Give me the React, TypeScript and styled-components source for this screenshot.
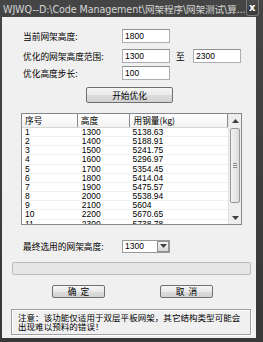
import React from "react";
import styled, { createGlobalStyle } from "styled-components";

const GlobalStyle = createGlobalStyle`
  html, body {
    margin: 0;
    padding: 0;
    background: #2e2e2e;
  }
  body {
    font-family: "Noto Sans CJK SC", "Liberation Sans", sans-serif;
  }
`;

interface ResultRow {
  no: number;
  height: number;
  steel: string;
}

const rows: ResultRow[] = [
  { no: 1, height: 1300, steel: "5138.63" },
  { no: 2, height: 1400, steel: "5188.91" },
  { no: 3, height: 1500, steel: "5241.75" },
  { no: 4, height: 1600, steel: "5296.97" },
  { no: 5, height: 1700, steel: "5354.45" },
  { no: 6, height: 1800, steel: "5414.04" },
  { no: 7, height: 1900, steel: "5475.57" },
  { no: 8, height: 2000, steel: "5538.94" },
  { no: 9, height: 2100, steel: "5604" },
  { no: 10, height: 2200, steel: "5670.65" },
  { no: 11, height: 2300, steel: "5738.78" },
];

const Window = styled.div`
  width: 263px;
  height: 342px;
  background: linear-gradient(#454545, #383838);
  display: flex;
  flex-direction: column;
  overflow: hidden;
`;

const TitleBar = styled.div`
  height: 17px;
  display: flex;
  align-items: center;
  justify-content: space-between;
  padding-left: 3px;
  padding-right: 4px;
`;

const TitleText = styled.div`
  font-family: "DejaVu Sans", "Noto Sans CJK SC", sans-serif;
  font-size: 9.6px;
  color: #d4d4d4;
  white-space: nowrap;
  letter-spacing: -0.1px;
`;

const CloseButton = styled.div`
  width: 30px;
  height: 16px;
  margin-top: -2px;
  box-sizing: border-box;
  border: 1px solid #7a7a7a;
  border-top: none;
  border-radius: 0 0 3px 3px;
  background: linear-gradient(#4c4c4c, #3a3a3a);
  color: #ffffff;
  font-family: "DejaVu Sans", sans-serif;
  font-weight: bold;
  font-size: 10px;
  display: flex;
  align-items: center;
  justify-content: center;
`;

const Client = styled.div`
  margin-left: 2px;
  width: 254px;
  height: 321px;
  background: #f0f0f0;
  display: flex;
  flex-direction: column;
  font-size: 8.7px;
  color: #000;
`;

const FieldRow = styled.div<{ $mt: number }>`
  display: flex;
  align-items: center;
  height: 14px;
  margin-top: ${(p) => p.$mt}px;
  padding-left: 21px;
`;

const Label = styled.div`
  width: 99px;
  white-space: nowrap;
`;

const TextBox = styled.div`
  width: 48px;
  height: 14px;
  box-sizing: border-box;
  background: #fff;
  border: 1px solid #abadb3;
  border-top-color: #8e8f8f;
  font-family: "Liberation Sans", sans-serif;
  font-size: 8.5px;
  padding-left: 2px;
  display: flex;
  align-items: center;
`;

const To = styled.div`
  width: 23px;
  padding-left: 6px;
  box-sizing: border-box;
`;

const PushButton = styled.div<{ $w: number }>`
  width: ${(p) => p.$w}px;
  height: 100%;
  box-sizing: border-box;
  border: 1px solid #707070;
  border-radius: 2px;
  background: linear-gradient(#f6f6f6 0%, #e9e9e9 50%, #dcdcdc 51%, #d2d2d2 100%);
  display: flex;
  align-items: center;
  justify-content: center;
  white-space: pre;
`;

const ButtonRow = styled.div<{ $mt: number; $h: number; $pl: number; $gap: number }>`
  display: flex;
  height: ${(p) => p.$h}px;
  margin-top: ${(p) => p.$mt}px;
  padding-left: ${(p) => p.$pl}px;
  gap: ${(p) => p.$gap}px;
`;

const ListView = styled.div`
  margin-top: 10px;
  margin-left: 19px;
  width: 221px;
  height: 112px;
  box-sizing: border-box;
  border: 1px solid #828790;
  background: #fff;
  display: flex;
  overflow: hidden;
`;

const ListBody = styled.div`
  flex: 1;
  display: flex;
  flex-direction: column;
  overflow: hidden;
`;

const Header = styled.div`
  display: flex;
  height: 13px;
  flex-shrink: 0;
  background: linear-gradient(#ffffff, #f2f2f2);
  border-bottom: 1px solid #d5d5d5;
`;

const HeaderCell = styled.div<{ $w: number }>`
  width: ${(p) => p.$w}px;
  box-sizing: border-box;
  border-right: 1px solid #8a8a8a;
  padding-left: 3px;
  display: flex;
  align-items: center;
  white-space: nowrap;
  font-size: 8.7px;
`;

const DataRow = styled.div`
  display: flex;
  height: 9.17px;
  flex-shrink: 0;
  border-bottom: 1px solid #f0f0f0;
  box-sizing: border-box;
`;

const DataCell = styled.div<{ $w: number; $pl: number }>`
  width: ${(p) => p.$w}px;
  padding-left: ${(p) => p.$pl}px;
  box-sizing: border-box;
  font-family: "Liberation Sans", sans-serif;
  font-size: 8.5px;
  line-height: 9px;
  white-space: nowrap;
`;

const ScrollBar = styled.div`
  width: 12px;
  display: flex;
  flex-direction: column;
  background: #eeeeee;
  border-left: 1px solid #e2e2e2;
`;

const ScrollArrow = styled.div`
  height: 13px;
  display: flex;
  align-items: center;
  justify-content: center;
`;

const Thumb = styled.div`
  margin: 1px 0 0 1px;
  width: 10px;
  height: 75px;
  box-sizing: border-box;
  border: 1px solid #9a9a9a;
  border-radius: 2px;
  background: linear-gradient(90deg, #f2f2f2, #dcdcdc);
  display: flex;
  align-items: center;
  justify-content: center;
`;

const Grip = styled.div`
  width: 4px;
  height: 5px;
  background: repeating-linear-gradient(#8a8a8a 0 1px, transparent 1px 2px);
`;

const Spacer = styled.div`
  flex: 1;
`;

const Combo = styled.div`
  width: 48px;
  height: 13px;
  box-sizing: border-box;
  background: #fff;
  border: 1px solid #9a9a9a;
  display: flex;
  align-items: stretch;
  font-family: "Liberation Sans", sans-serif;
  font-size: 8.5px;
`;

const ComboText = styled.div`
  flex: 1;
  padding-left: 2px;
  display: flex;
  align-items: center;
`;

const ComboButton = styled.div`
  width: 12px;
  box-sizing: border-box;
  border: 1px solid #8f8f8f;
  background: linear-gradient(#f4f4f4, #d8d8d8);
  display: flex;
  align-items: center;
  justify-content: center;
`;

const Progress = styled.div`
  margin-top: 9px;
  margin-left: 10px;
  width: 239px;
  height: 13px;
  box-sizing: border-box;
  border: 1px solid #bcbcbc;
  border-radius: 2px;
  background: #e6e6e6;
`;

const Note = styled.div`
  margin-top: 11px;
  margin-left: 9px;
  width: 240px;
  height: 26px;
  box-sizing: border-box;
  border: 1px solid #a0a0a0;
  box-shadow: inset 1px 1px 0 #ffffff, 1px 1px 0 #ffffff;
  padding: 3px 0 0 6px;
  font-size: 8.5px;
  line-height: 9px;
  letter-spacing: 0.05px;
`;

const NoteLine = styled.div`
  height: 9px;
  white-space: nowrap;
`;

const Arrow = ({ down }: { down?: boolean }) => (
  <svg width="7" height="4" viewBox="0 0 7 4">
    <path d={down ? "M0 0 H7 L3.5 4 Z" : "M0 4 H7 L3.5 0 Z"} fill="#404040" />
  </svg>
);

export default function App() {
  return (
    <>
      <GlobalStyle />
      <Window>
        <TitleBar>
          <TitleText>WJWQ--D:\Code Management\网架程序\网架测试\算...</TitleText>
          <CloseButton>x</CloseButton>
        </TitleBar>
        <Client>
          <FieldRow $mt={12}>
            <Label>当前网架高度:</Label>
            <TextBox>1800</TextBox>
          </FieldRow>
          <FieldRow $mt={6}>
            <Label>优化的网架高度范围:</Label>
            <TextBox>1300</TextBox>
            <To>至</To>
            <TextBox>2300</TextBox>
          </FieldRow>
          <FieldRow $mt={3}>
            <Label>优化高度步长:</Label>
            <TextBox>100</TextBox>
          </FieldRow>
          <ButtonRow $mt={7} $h={16} $pl={84} $gap={0}>
            <PushButton $w={87}>开始优化</PushButton>
          </ButtonRow>
          <ListView>
            <ListBody>
              <Header>
                <HeaderCell $w={56}>序号</HeaderCell>
                <HeaderCell $w={53}>高度</HeaderCell>
                <HeaderCell $w={98}>用钢量(kg)</HeaderCell>
              </Header>
              {rows.map((r) => (
                <DataRow key={r.no}>
                  <DataCell $w={56} $pl={3}>{r.no}</DataCell>
                  <DataCell $w={53} $pl={4}>{r.height}</DataCell>
                  <DataCell $w={98} $pl={2}>{r.steel}</DataCell>
                </DataRow>
              ))}
            </ListBody>
            <ScrollBar>
              <ScrollArrow>
                <Arrow />
              </ScrollArrow>
              <Thumb>
                <Grip />
              </Thumb>
              <Spacer />
              <ScrollArrow>
                <Arrow down />
              </ScrollArrow>
            </ScrollBar>
          </ListView>
          <FieldRow $mt={14}>
            <Label>最终选用的网架高度:</Label>
            <Combo>
              <ComboText>1300</ComboText>
              <ComboButton>
                <Arrow down />
              </ComboButton>
            </Combo>
          </FieldRow>
          <Progress />
          <ButtonRow $mt={10} $h={13} $pl={50} $gap={55}>
            <PushButton $w={53}>{"确  定"}</PushButton>
            <PushButton $w={53}>{"取  消"}</PushButton>
          </ButtonRow>
          <Note>
            <NoteLine>注意：该功能仅适用于双层平板网架，其它结构类型可能会</NoteLine>
            <NoteLine>出现难以预料的错误！</NoteLine>
          </Note>
        </Client>
      </Window>
    </>
  );
}
